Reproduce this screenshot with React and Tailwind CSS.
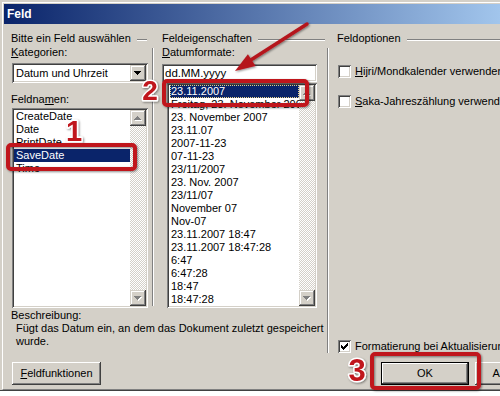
import React from "react";

const F = "font-['Liberation_Sans',Arial,sans-serif]";
const SUNKEN =
  "shadow-[inset_1px_1px_0_#808080,inset_-1px_-1px_0_#ffffff,inset_2px_2px_0_#404040,inset_-2px_-2px_0_#d4d0c8]";
const RAISED =
  "shadow-[inset_-1px_-1px_0_#404040,inset_1px_1px_0_#ffffff,inset_-2px_-2px_0_#808080,inset_2px_2px_0_#d4d0c8]";
const SBTN =
  "shadow-[inset_-1px_-1px_0_#404040,inset_1px_1px_0_#d4d0c8,inset_-2px_-2px_0_#808080,inset_2px_2px_0_#ffffff]";
const DITHER =
  "bg-[image:repeating-conic-gradient(#d4d0c8_0%_25%,#ffffff_0%_50%)] bg-[length:2px_2px]";

function Tri({ dir = "down", color = "#000", shadow = false }) {
  const rows =
    dir === "down"
      ? [[0, 7], [1, 5], [2, 3], [3, 1]]
      : [[3, 1], [2, 3], [1, 5], [0, 7]];
  return (
    <svg width="8" height="5" viewBox="0 0 8 5" shapeRendering="crispEdges">
      {shadow &&
        rows.map(([x, w], i) => (
          <rect key={"s" + i} x={x + 1} y={i + 1} width={w} height={1} fill="#ffffff" />
        ))}
      {rows.map(([x, w], i) => (
        <rect key={i} x={x} y={i} width={w} height={1} fill={color} />
      ))}
    </svg>
  );
}

function ScrollBar() {
  return (
    <div className={`w-[16px] shrink-0 flex flex-col ${DITHER}`}>
      <div className={`w-[16px] h-[16px] bg-[#d4d0c8] ${SBTN} flex items-center justify-center`}>
        <Tri dir="up" color="#808080" shadow />
      </div>
      <div className="flex-1" />
      <div className={`w-[16px] h-[16px] bg-[#d4d0c8] ${SBTN} flex items-center justify-center`}>
        <Tri dir="down" color="#808080" shadow />
      </div>
    </div>
  );
}

function ListBox({ items, selected, focus, className }) {
  return (
    <div className={`bg-white ${SUNKEN} p-[2px] flex ${className}`}>
      <div className="flex-1 min-w-0 overflow-hidden">
        {items.map((t, i) => (
          <div
            key={i}
            className={
              i === selected
                ? focus
                  ? "h-[13px] leading-[13px] whitespace-nowrap pl-[1px] ml-[1px] bg-[#0a246a] text-white outline-1 outline-dotted outline-[#e8d48a] -outline-offset-1"
                  : "h-[13px] leading-[13px] whitespace-nowrap pl-[2px] bg-[#0a246a] text-white"
                : "h-[13px] leading-[13px] whitespace-nowrap pl-[2px]"
            }
          >
            {t}
          </div>
        ))}
      </div>
      <ScrollBar />
    </div>
  );
}

function Check({ checked }) {
  const px = [
    [6, 0], [5, 1], [6, 1], [0, 2], [4, 2], [5, 2], [6, 2],
    [0, 3], [1, 3], [3, 3], [4, 3], [5, 3],
    [0, 4], [1, 4], [2, 4], [3, 4], [4, 4],
    [1, 5], [2, 5], [3, 5], [2, 6],
  ];
  return (
    <div className={`w-[13px] h-[13px] bg-white ${SUNKEN} shrink-0 flex items-center justify-center`}>
      {checked && (
        <svg width="7" height="7" viewBox="0 0 7 7" shapeRendering="crispEdges">
          {px.map(([x, y], i) => (
            <rect key={i} x={x} y={y} width={1} height={1} fill="#000" />
          ))}
        </svg>
      )}
    </div>
  );
}

function Heading({ children, lineClass = "" }) {
  return (
    <div className="h-[13px] flex items-start">
      <span className="whitespace-nowrap">{children}</span>
      <div className={`ml-[6px] mt-[7px] h-[2px] flex-1 border-t border-[#808080] bg-white ${lineClass}`} />
    </div>
  );
}

function Annotations() {
  const red = "#c0141c";
  return (
    <svg
      className="absolute left-0 top-0 pointer-events-none"
      width="500"
      height="396"
      viewBox="0 0 500 396"
    >
      <defs>
        <filter id="ds" x="-20%" y="-20%" width="140%" height="140%">
          <feDropShadow dx="1" dy="1" stdDeviation="0.8" floodColor="#000" floodOpacity="0.45" />
        </filter>
      </defs>
      <g filter="url(#ds)">
        <rect x="8" y="145" width="127" height="24" rx="3" fill="none" stroke={red} strokeWidth="4" />
        <rect x="164" y="81" width="143" height="24" rx="3" fill="none" stroke={red} strokeWidth="4" />
        <rect x="372" y="354" width="107" height="34" rx="3" fill="none" stroke={red} strokeWidth="4" />
        <line x1="307" y1="24" x2="250" y2="60.5" stroke="#b5161e" strokeWidth="3.5" strokeLinecap="round" />
        <polygon points="235,71 255.5,66 247.9,54.2" fill="#b5161e" />
        {[
          ["1", 74, 141, 29],
          ["2", 150, 100, 28],
          ["3", 357, 381, 31],
        ].map(([t, x, y, s]) => (
          <text
            key={t}
            x={x}
            y={y}
            fontSize={s}
            fontWeight="900"
            textAnchor="middle"
            fontFamily="'Liberation Sans', Arial, sans-serif"
            fill={red}
            stroke="#ffffff"
            strokeWidth="3"
            strokeLinejoin="round"
            paintOrder="stroke"
          >
            {t}
          </text>
        ))}
      </g>
    </svg>
  );
}

export default function App() {
  const dateItems = [
    "23.11.2007",
    "Freitag, 23. November 2007",
    "23. November 2007",
    "23.11.07",
    "2007-11-23",
    "07-11-23",
    "23/11/2007",
    "23. Nov. 2007",
    "23/11/07",
    "November 07",
    "Nov-07",
    "23.11.2007 18:47",
    "23.11.2007 18:47:28",
    "6:47",
    "6:47:28",
    "18:47",
    "18:47:28",
  ];
  return (
    <div className={`relative w-[500px] h-[396px] overflow-hidden bg-white text-[11px] leading-[13px] text-black ${F}`}>
      <div className="w-[620px] h-[391px] bg-[#d4d0c8] pl-[2px] pt-[2px] border-b border-[#404040]">
        <div className="h-full border-l border-t border-white border-b border-b-[#808080] pl-[1px] pt-[1px] flex flex-col">
          {/* title bar */}
          <div className="h-[20px] shrink-0 flex items-center pl-[3px] bg-[linear-gradient(to_right,#0a246a,#a6caf0_510px)]">
            <span className="text-white font-bold text-[12px] leading-[14px]">Feld</span>
          </div>
          {/* body */}
          <div className="flex-1 pl-[7px] pt-[8px] flex flex-col">
            <div className="flex items-start">
              {/* left + middle */}
              <div className="w-[316px] flex flex-col">
                <div className="flex items-start">
                  {/* left column */}
                  <div className="w-[137px] flex flex-col">
                    <Heading lineClass="mr-[1px]">Bitte ein Feld auswählen</Heading>
                    <div className="mt-[1px] h-[13px]">
                      <span className="underline">K</span>ategorien:
                    </div>
                    <div className={`mt-[4px] ml-[1px] w-[136px] h-[20px] bg-white ${SUNKEN} p-[2px] flex items-center`}>
                      <span className="flex-1 pl-[2px] whitespace-nowrap">Datum und Uhrzeit</span>
                      <div className={`w-[16px] h-[16px] bg-[#d4d0c8] ${SBTN} flex items-center justify-center`}>
                        <Tri dir="down" color="#000" />
                      </div>
                    </div>
                    <div className="mt-[10px] h-[13px]">
                      Feldna<span className="underline">m</span>en:
                    </div>
                    <ListBox
                      className="mt-[2px] ml-[1px] w-[136px] h-[200px]"
                      items={["CreateDate", "Date", "PrintDate", "SaveDate", "Time"]}
                      selected={3}
                    />
                  </div>
                  {/* separator 1 */}
                  <div className="ml-[4px] mt-[16px] h-[258px] w-[2px] border-l border-[#808080] bg-white" />
                  {/* middle column */}
                  <div className="ml-[8px] w-[165px] flex flex-col">
                    <Heading lineClass="mr-[2px]">Feldeigenschaften</Heading>
                    <div className="mt-[1px] h-[13px]">
                      <span className="underline">D</span>atumformate:
                    </div>
                    <div className={`mt-[5px] w-[155px] h-[18px] bg-white ${SUNKEN} pl-[3px] flex items-center`}>
                      <span className="text-[11.5px]">dd.MM.yyyy</span>
                    </div>
                    <ListBox
                      className="mt-[1px] ml-[5px] w-[150px] h-[225px]"
                      items={dateItems}
                      selected={0}
                      focus
                    />
                  </div>
                </div>
                {/* description */}
                <div className="mt-[1px] h-[13px]">Beschreibung:</div>
                <div className="pl-[5px] whitespace-nowrap">
                  Fügt das Datum ein, an dem das Dokument zuletzt gespeichert
                  <br />
                  wurde.
                </div>
              </div>
              {/* separator 2 */}
              <div className="mt-[16px] h-[305px] w-[2px] border-l border-[#808080] bg-white" />
              {/* right column */}
              <div className="ml-[8px] flex-1 h-[321px] flex flex-col">
                <Heading>Feldoptionen</Heading>
                <div className="mt-[20px] ml-[1px] h-[13px] flex items-center gap-[4px] whitespace-nowrap">
                  <Check />
                  <span>
                    <span className="underline">H</span>ijri/Mondkalender verwenden
                  </span>
                </div>
                <div className="mt-[17px] ml-[1px] h-[13px] flex items-center gap-[4px] whitespace-nowrap">
                  <Check />
                  <span>
                    <span className="underline">S</span>aka-Jahreszählung verwenden
                  </span>
                </div>
                <div className="mt-auto ml-[1px] h-[13px] flex items-center gap-[4px] whitespace-nowrap">
                  <Check checked />
                  <span>Formatierung bei Aktualisierung beibehalten</span>
                </div>
              </div>
            </div>
            {/* buttons */}
            <div className="mt-[9px] flex items-start">
              <div className={`ml-[1px] w-[89px] h-[23px] bg-[#d4d0c8] ${RAISED} flex items-center justify-center`}>
                <span>
                  <span className="underline">F</span>eldfunktionen
                </span>
              </div>
              <div className="ml-[280px] w-[88px] h-[23px] border border-black">
                <div className={`w-full h-full bg-[#d4d0c8] ${RAISED} flex items-center justify-center`}>OK</div>
              </div>
              <div className={`ml-[6px] w-[88px] h-[23px] bg-[#d4d0c8] ${RAISED} flex items-center justify-center`}>
                Abbrechen
              </div>
            </div>
          </div>
        </div>
      </div>
      <Annotations />
    </div>
  );
}
